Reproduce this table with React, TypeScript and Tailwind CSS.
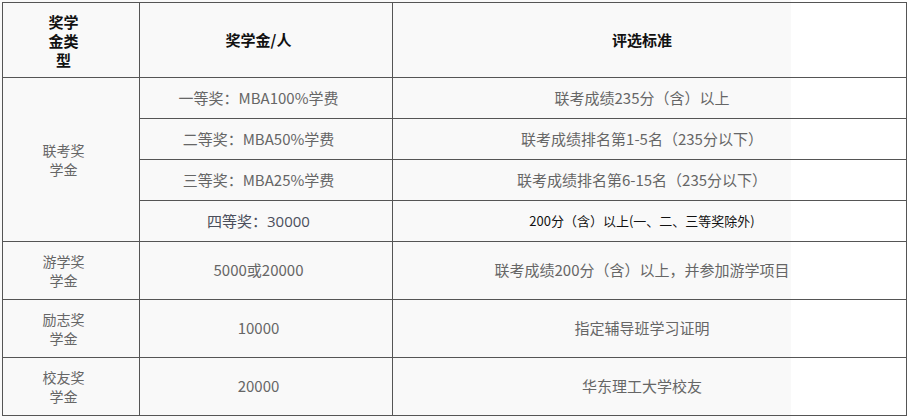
import React from 'react';

const tierRows = [
  { amount: '一等奖：MBA100%学费', rule: '联考成绩235分（含）以上' },
  { amount: '二等奖：MBA50%学费', rule: '联考成绩排名第1-5名（235分以下）' },
  { amount: '三等奖：MBA25%学费', rule: '联考成绩排名第6-15名（235分以下）' },
];

const otherRows = [
  { type: ['游学奖', '学金'], amount: '5000或20000', rule: '联考成绩200分（含）以上，并参加游学项目' },
  { type: ['励志奖', '学金'], amount: '10000', rule: '指定辅导班学习证明' },
  { type: ['校友奖', '学金'], amount: '20000', rule: '华东理工大学校友' },
];

const cell = 'border border-[#555] text-center align-middle pr-[15px]';

const App = () => {
  return (
    <div className="w-[791px] min-h-[420px] bg-[#f9f9f9] p-[2px] font-['Noto_Sans_CJK_SC',sans-serif] text-[15px] text-[#666]">
      <table className="w-[904px] table-fixed border-collapse">
        <colgroup>
          <col className="w-[137px]" />
          <col className="w-[253px]" />
          <col className="w-[514px]" />
        </colgroup>
        <tbody>
          <tr className="h-[75px] font-bold text-[#111]">
            <td className={`${cell} leading-[19px]`}>
              奖学<br />金类<br />型
            </td>
            <td className={cell}>奖学金/人</td>
            <td className={cell}>评选标准</td>
          </tr>
          {tierRows.map((row, i) => (
            <tr key={i} className="h-[41px]">
              {i === 0 && (
                <td rowSpan={4} className={`${cell} text-[14px] leading-[19px]`}>
                  联考奖<br />学金
                </td>
              )}
              <td className={cell}>{row.amount}</td>
              <td className={cell}>{row.rule}</td>
            </tr>
          ))}
          <tr className="h-[41px]">
            <td className={`${cell} text-[#4b4f5c] font-['Open_Sans','Noto_Sans_CJK_SC',sans-serif]`}>四等奖：30000</td>
            <td className={`${cell} text-[13px] text-[#111]`}>200分（含）以上(一、二、三等奖除外)</td>
          </tr>
          {otherRows.map((row, i) => (
            <tr key={i} className="h-[58px]">
              <td className={`${cell} text-[14px] leading-[19px]`}>
                {row.type[0]}<br />{row.type[1]}
              </td>
              <td className={cell}>{row.amount}</td>
              <td className={cell}>{row.rule}</td>
            </tr>
          ))}
        </tbody>
      </table>
    </div>
  );
};

export default App;
